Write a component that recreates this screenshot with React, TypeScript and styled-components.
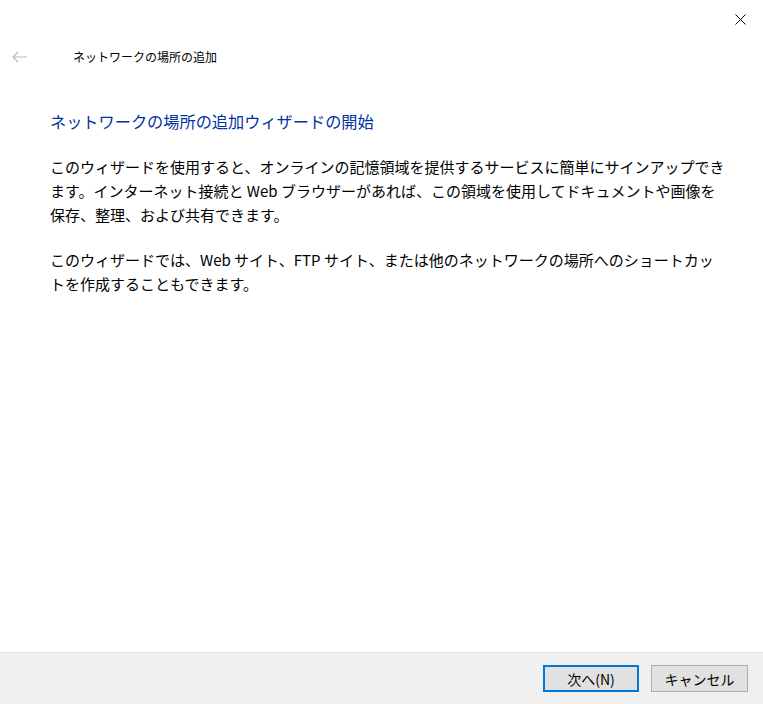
import React from 'react';
import styled, { createGlobalStyle } from 'styled-components';

const GlobalStyle = createGlobalStyle`
  html, body {
    margin: 0;
    padding: 0;
    height: 100%;
    background: #ffffff;
  }
  #root {
    height: 100%;
  }
  * {
    box-sizing: border-box;
  }
`;

const FONT = `"Noto Sans CJK JP", "Noto Sans", sans-serif`;

export default function App() {
  return (
    <>
      <GlobalStyle />
      <StyledWindow>
        <StyledTitleBar>
          <StyledCloseButton aria-label="閉じる">
            <svg width="11" height="11" viewBox="0 0 11 11">
              <path d="M0.5 0.5 L10.5 10.5 M10.5 0.5 L0.5 10.5" stroke="#000" strokeWidth="1" />
            </svg>
          </StyledCloseButton>
        </StyledTitleBar>
        <StyledNavRow>
          <StyledBackButton aria-label="戻る" disabled>
            <svg width="16" height="12" viewBox="0 0 16 12">
              <path d="M1 6 H15 M6 1 L1 6 L6 11" stroke="#b9b9b9" strokeWidth="1.2" fill="none" />
            </svg>
          </StyledBackButton>
          <StyledWindowTitle>ネットワークの場所の追加</StyledWindowTitle>
        </StyledNavRow>
        <StyledContent>
          <StyledHeading>ネットワークの場所の追加ウィザードの開始</StyledHeading>
          <StyledParagraph>
            このウィザードを使用すると、オンラインの記憶領域を提供するサービスに簡単にサインアップできます。インターネット接続と Web ブラウザーがあれば、この領域を使用してドキュメントや画像を保存、整理、および共有できます。
          </StyledParagraph>
          <StyledParagraph>
            このウィザードでは、Web サイト、FTP サイト、または他のネットワークの場所へのショートカットを作成することもできます。
          </StyledParagraph>
        </StyledContent>
        <StyledFooter>
          <StyledButton $primary>次へ(N)</StyledButton>
          <StyledButton>キャンセル</StyledButton>
        </StyledFooter>
      </StyledWindow>
    </>
  );
}

const StyledWindow = styled.div`
  height: 100%;
  display: flex;
  flex-direction: column;
  font-family: ${FONT};
  color: #000;
`;

const StyledTitleBar = styled.div`
  height: 38px;
  display: flex;
  justify-content: flex-end;
`;

const StyledCloseButton = styled.button`
  width: 46px;
  height: 38px;
  border: none;
  background: transparent;
  display: flex;
  align-items: center;
  justify-content: center;
  padding: 0;
`;

const StyledNavRow = styled.div`
  height: 38px;
  display: flex;
  align-items: center;
`;

const StyledBackButton = styled.button`
  width: 36px;
  height: 30px;
  margin-left: 2px;
  border: none;
  background: transparent;
  display: flex;
  align-items: center;
  justify-content: center;
  padding: 0;
`;

const StyledWindowTitle = styled.div`
  margin-left: 35px;
  font-size: 12px;
  line-height: 16px;
  color: #000;
`;

const StyledContent = styled.main`
  flex: 1;
  padding: 33px 37px 0 50px;
`;

const StyledHeading = styled.h1`
  margin: 0 0 22px;
  font-size: 16.2px;
  font-weight: normal;
  line-height: 24px;
  color: #0033a0;
`;

const StyledParagraph = styled.p`
  margin: 0 0 21px;
  font-size: 15px;
  line-height: 24px;
  color: #000;
`;

const StyledFooter = styled.footer`
  height: 52px;
  background: #f0f0f0;
  border-top: 1px solid #dfdfdf;
  display: flex;
  align-items: center;
  justify-content: flex-end;
  gap: 12px;
  padding: 0 15px 0 0;
`;

const StyledButton = styled.button<{ $primary?: boolean }>`
  width: ${(p) => (p.$primary ? '96px' : '97px')};
  height: 27px;
  background: #e1e1e1;
  border: ${(p) => (p.$primary ? '2px solid #0078d7' : '1px solid #adadad')};
  font-family: ${FONT};
  font-size: 14px;
  color: #000;
  padding: 0;
`;
